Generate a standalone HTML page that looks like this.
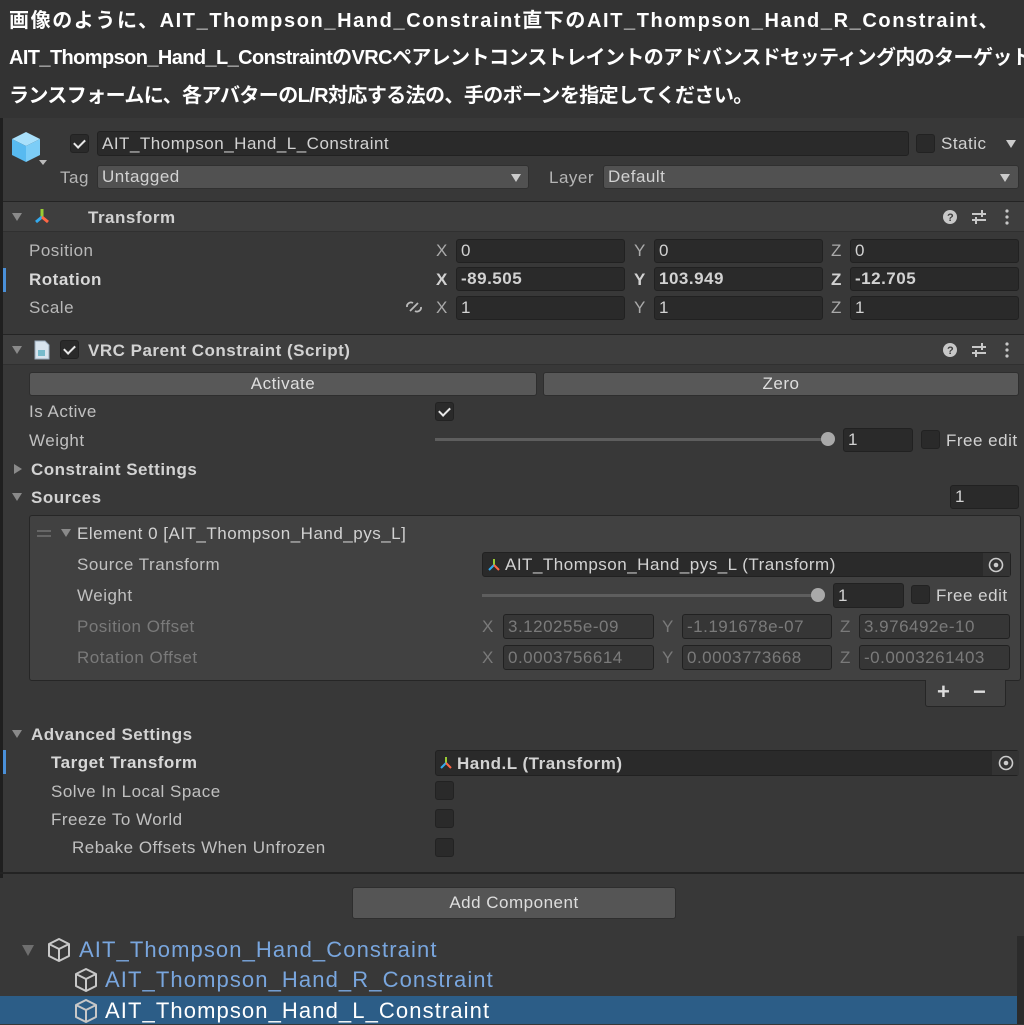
<!DOCTYPE html>
<html><head><meta charset="utf-8"><style>
*{margin:0;padding:0;box-sizing:border-box}
body{width:1024px;height:1024px;background:#383838;position:relative;overflow:hidden;font-family:"Liberation Sans","Noto Sans CJK JP",sans-serif;color:#d2d2d2;font-size:17px;letter-spacing:0.5px}
.a{position:absolute;white-space:nowrap}
.t{position:absolute;white-space:nowrap;line-height:20px}
.f{position:absolute;background:#2a2a2a;border:1px solid #212121;border-radius:3px;color:#d2d2d2;padding-left:4px;font-size:17px;line-height:22px;white-space:nowrap;overflow:hidden}
.d{position:absolute;background:#515151;border:1px solid #303030;border-radius:3px;padding-left:4px;font-size:17px;line-height:22px}
.cb{position:absolute;width:19px;height:19px;background:#2a2a2a;border:1px solid #222;border-radius:3px}
.hd{position:absolute;left:3px;right:0;background:#3e3e3e;border-top:1px solid #242424;border-bottom:1px solid #303030}
.b{font-weight:bold}
.g{color:#7a7a7a}
.sep{position:absolute;left:3px;right:0;height:2px;background:#232323}
.ck::after{content:"";position:absolute;left:5px;top:2px;width:5px;height:9px;border:solid #e8e8e8;border-width:0 2px 2px 0;transform:rotate(45deg)}
.tri{position:absolute;width:0;height:0;border-left:5px solid transparent;border-right:5px solid transparent;border-top:8px solid #8a8a8a}
.trr{position:absolute;width:0;height:0;border-top:5px solid transparent;border-bottom:5px solid transparent;border-left:8px solid #8a8a8a}
.btn{position:absolute;background:#585858;border:1px solid #2e2e2e;border-radius:3px;text-align:center;color:#dedede}
.hi{color:#79a6de;font-size:22px;line-height:28px;letter-spacing:1.1px}
.cap{position:absolute;white-space:nowrap;left:9px;color:#fff;font-size:20px;line-height:24px;font-weight:bold}
</style></head><body>
<div class="a" style="left:0;top:0;width:1024px;height:118px;background:#333"></div>
<div class="cap" style="top:9px;letter-spacing:1.6px">画像のように、AIT_Thompson_Hand_Constraint直下のAIT_Thompson_Hand_R_Constraint、</div>
<div class="cap" style="top:46px;letter-spacing:-0.6px">AIT_Thompson_Hand_L_ConstraintのVRCペアレントコンストレイントのアドバンスドセッティング内のターゲットト</div>
<div class="cap" style="top:84px;letter-spacing:-0.6px">ランスフォームに、各アバターのL/R対応する法の、手のボーンを指定してください。</div>
<div class="a" style="left:0;top:118px;width:3px;height:760px;background:#1f1f1f"></div>

<svg class="a" style="left:10px;top:130px" width="40" height="40" viewBox="0 0 40 40"><polygon points="16,2 30,9 16,16 2,9" fill="#a9e0fb"/><polygon points="2,9 16,16 16,32 2,25" fill="#58baf0"/><polygon points="30,9 16,16 16,32 30,25" fill="#7ccdf7"/><polygon points="29,30 37,30 33,35" fill="#bbb"/></svg>
<div class="cb ck" style="left:70px;top:134px"></div>
<div class="f" style="left:97px;top:131px;width:812px;height:25px;line-height:24px">AIT_Thompson_Hand_L_Constraint</div>
<div class="cb" style="left:916px;top:134px"></div>
<div class="t" style="left:941px;top:134px">Static</div>
<div class="tri" style="left:1006px;top:140px;border-top-color:#ccc"></div>
<div class="t" style="left:60px;top:168px;color:#b5b5b5">Tag</div>
<div class="d" style="left:97px;top:165px;width:432px;height:24px">Untagged</div>
<div class="tri" style="left:511px;top:174px;border-top-color:#ccc"></div>
<div class="t" style="left:549px;top:168px;color:#b5b5b5">Layer</div>
<div class="d" style="left:603px;top:165px;width:416px;height:24px">Default</div>
<div class="tri" style="left:1000px;top:174px;border-top-color:#ccc"></div>

<div class="hd" style="top:201px;height:31px"></div>
<div class="tri" style="left:12px;top:213px"></div>
<svg class="a" style="left:32px;top:206px" width="20" height="20"><path d="M10 3v8" stroke="#9c3" stroke-width="3"/><path d="M10 11l-6 5" stroke="#3ae" stroke-width="3"/><path d="M10 11l6 5" stroke="#f64" stroke-width="3"/></svg>
<div class="t b" style="left:88px;top:208px">Transform</div>
<svg class="a" style="left:942px;top:207px" width="80" height="20"><circle cx="8" cy="10" r="7" fill="#c8c8c8"/><text x="5" y="14" font-size="11" font-weight="bold" fill="#3e3e3e" font-family="Liberation Sans">?</text><path d="M30 7h14M30 13h14M40 3v7M34 10v7" stroke="#c8c8c8" stroke-width="2"/><circle cx="65" cy="4" r="1.6" fill="#c8c8c8"/><circle cx="65" cy="10" r="1.6" fill="#c8c8c8"/><circle cx="65" cy="16" r="1.6" fill="#c8c8c8"/></svg>

<div class="t" style="left:29px;top:241px;color:#b8b8b8">Position</div>
<div class="a" style="left:3px;top:268px;width:3px;height:24px;background:#4a90d9"></div>
<div class="t b" style="left:29px;top:270px;color:#d8d8d8">Rotation</div>
<div class="t" style="left:29px;top:298px;color:#b8b8b8">Scale</div>
<svg class="a" style="left:404px;top:298px" width="20" height="18"><path d="M3 9a4 4 0 0 1 6-4M17 9a4 4 0 0 1-6 4M6 13l8-8" stroke="#bbb" stroke-width="1.8" fill="none"/></svg>

<div class="t" style="left:436px;top:241px;color:#aaa">X</div><div class="f" style="left:456px;top:239px;width:169px;height:24px">0</div>
<div class="t" style="left:634px;top:241px;color:#aaa">Y</div><div class="f" style="left:654px;top:239px;width:169px;height:24px">0</div>
<div class="t" style="left:831px;top:241px;color:#aaa">Z</div><div class="f" style="left:850px;top:239px;width:169px;height:24px">0</div>
<div class="t b" style="left:436px;top:270px">X</div><div class="f b" style="left:456px;top:267px;width:169px;height:24px">-89.505</div>
<div class="t b" style="left:634px;top:270px">Y</div><div class="f b" style="left:654px;top:267px;width:169px;height:24px">103.949</div>
<div class="t b" style="left:831px;top:270px">Z</div><div class="f b" style="left:850px;top:267px;width:169px;height:24px">-12.705</div>
<div class="t" style="left:436px;top:298px;color:#aaa">X</div><div class="f" style="left:456px;top:296px;width:169px;height:24px">1</div>
<div class="t" style="left:634px;top:298px;color:#aaa">Y</div><div class="f" style="left:654px;top:296px;width:169px;height:24px">1</div>
<div class="t" style="left:831px;top:298px;color:#aaa">Z</div><div class="f" style="left:850px;top:296px;width:169px;height:24px">1</div>

<div class="hd" style="top:334px;height:31px"></div>
<div class="tri" style="left:12px;top:346px"></div>
<svg class="a" style="left:34px;top:340px" width="16" height="20"><path d="M1 1h10l4 4v14H1z" fill="#d8e4ee" stroke="#9ab" /><rect x="4" y="10" width="7" height="6" fill="#7bc"/></svg>
<div class="cb ck" style="left:60px;top:340px"></div>
<div class="t b" style="left:88px;top:341px">VRC Parent Constraint (Script)</div>
<svg class="a" style="left:942px;top:340px" width="80" height="20"><circle cx="8" cy="10" r="7" fill="#c8c8c8"/><text x="5" y="14" font-size="11" font-weight="bold" fill="#3e3e3e" font-family="Liberation Sans">?</text><path d="M30 7h14M30 13h14M40 3v7M34 10v7" stroke="#c8c8c8" stroke-width="2"/><circle cx="65" cy="4" r="1.6" fill="#c8c8c8"/><circle cx="65" cy="10" r="1.6" fill="#c8c8c8"/><circle cx="65" cy="16" r="1.6" fill="#c8c8c8"/></svg>

<div class="btn" style="left:29px;top:372px;width:508px;height:24px;line-height:22px">Activate</div>
<div class="btn" style="left:543px;top:372px;width:476px;height:24px;line-height:22px">Zero</div>
<div class="t" style="left:29px;top:402px;color:#c0c0c0">Is Active</div>
<div class="cb ck" style="left:435px;top:402px"></div>
<div class="t" style="left:29px;top:431px;color:#c0c0c0">Weight</div>
<div class="a" style="left:435px;top:438px;width:390px;height:3px;background:#5e5e5e"></div>
<div class="a" style="left:821px;top:432px;width:14px;height:14px;border-radius:50%;background:#a9a9a9"></div>
<div class="f" style="left:843px;top:428px;width:70px;height:24px">1</div>
<div class="cb" style="left:921px;top:430px"></div>
<div class="t" style="left:946px;top:431px">Free edit</div>
<div class="trr" style="left:14px;top:464px"></div>
<div class="t b" style="left:31px;top:460px">Constraint Settings</div>
<div class="tri" style="left:12px;top:493px"></div>
<div class="t b" style="left:31px;top:488px">Sources</div>
<div class="f" style="left:950px;top:485px;width:69px;height:24px">1</div>

<div class="a" style="left:29px;top:515px;width:992px;height:166px;background:#414141;border:1px solid #262626;border-radius:3px"></div>
<div class="a" style="left:37px;top:530px;width:14px;height:2px;background:#666"></div>
<div class="a" style="left:37px;top:535px;width:14px;height:2px;background:#666"></div>
<div class="tri" style="left:61px;top:529px"></div>
<div class="t" style="left:77px;top:524px">Element 0 [AIT_Thompson_Hand_pys_L]</div>
<div class="t" style="left:77px;top:555px;color:#c0c0c0">Source Transform</div>
<div class="f" style="left:482px;top:552px;width:529px;height:25px;padding-left:22px;line-height:24px">AIT_Thompson_Hand_pys_L (Transform)</div>
<svg class="a" style="left:486px;top:557px" width="16" height="16"><path d="M8 2v6" stroke="#9c3" stroke-width="2"/><path d="M8 8l-5 5" stroke="#3ae" stroke-width="2"/><path d="M8 8l5 5" stroke="#f64" stroke-width="2"/></svg>
<div class="a" style="left:983px;top:553px;width:27px;height:23px;background:#333"></div>
<svg class="a" style="left:987px;top:556px" width="18" height="18"><circle cx="9" cy="9" r="6.5" stroke="#ccc" stroke-width="1.6" fill="none"/><circle cx="9" cy="9" r="2.3" fill="#ccc"/></svg>
<div class="t" style="left:77px;top:586px;color:#c0c0c0">Weight</div>
<div class="a" style="left:482px;top:594px;width:332px;height:3px;background:#5e5e5e"></div>
<div class="a" style="left:811px;top:588px;width:14px;height:14px;border-radius:50%;background:#a9a9a9"></div>
<div class="f" style="left:833px;top:583px;width:71px;height:25px;line-height:24px">1</div>
<div class="cb" style="left:911px;top:585px"></div>
<div class="t" style="left:936px;top:586px">Free edit</div>
<div class="t g" style="left:77px;top:617px">Position Offset</div>
<div class="t g" style="left:77px;top:648px">Rotation Offset</div>
<div class="t g" style="left:482px;top:617px">X</div><div class="f g" style="left:503px;top:614px;width:151px;height:25px;line-height:24px;background:#363636">3.120255e-09</div>
<div class="t g" style="left:662px;top:617px">Y</div><div class="f g" style="left:682px;top:614px;width:150px;height:25px;line-height:24px;background:#363636">-1.191678e-07</div>
<div class="t g" style="left:840px;top:617px">Z</div><div class="f g" style="left:859px;top:614px;width:151px;height:25px;line-height:24px;background:#363636">3.976492e-10</div>
<div class="t g" style="left:482px;top:648px">X</div><div class="f g" style="left:503px;top:645px;width:151px;height:25px;line-height:24px;background:#363636">0.0003756614</div>
<div class="t g" style="left:662px;top:648px">Y</div><div class="f g" style="left:682px;top:645px;width:150px;height:25px;line-height:24px;background:#363636">0.0003773668</div>
<div class="t g" style="left:840px;top:648px">Z</div><div class="f g" style="left:859px;top:645px;width:151px;height:25px;line-height:24px;background:#363636">-0.0003261403</div>
<div class="a" style="left:925px;top:680px;width:81px;height:27px;background:#414141;border:1px solid #262626;border-top:none;border-radius:0 0 3px 3px"></div>
<div class="t b" style="left:937px;top:682px;font-size:22px;color:#ddd">+</div>
<div class="t b" style="left:973px;top:682px;font-size:22px;color:#ddd">−</div>

<div class="tri" style="left:12px;top:730px"></div>
<div class="t b" style="left:31px;top:725px">Advanced Settings</div>
<div class="a" style="left:3px;top:750px;width:3px;height:24px;background:#4a90d9"></div>
<div class="t b" style="left:51px;top:753px;color:#d8d8d8">Target Transform</div>
<div class="f b" style="left:435px;top:750px;width:584px;height:26px;padding-left:21px;line-height:25px">Hand.L (Transform)</div>
<svg class="a" style="left:438px;top:755px" width="16" height="16"><path d="M8 2v6" stroke="#9c3" stroke-width="2"/><path d="M8 8l-5 5" stroke="#3ae" stroke-width="2"/><path d="M8 8l5 5" stroke="#f64" stroke-width="2"/></svg>
<div class="a" style="left:992px;top:751px;width:27px;height:24px;background:#333"></div>
<svg class="a" style="left:997px;top:754px" width="18" height="18"><circle cx="9" cy="9" r="6.5" stroke="#ccc" stroke-width="1.6" fill="none"/><circle cx="9" cy="9" r="2.3" fill="#ccc"/></svg>
<div class="t" style="left:51px;top:782px;color:#c0c0c0">Solve In Local Space</div><div class="cb" style="left:435px;top:781px"></div>
<div class="t" style="left:51px;top:810px;color:#c0c0c0">Freeze To World</div><div class="cb" style="left:435px;top:809px"></div>
<div class="t" style="left:72px;top:838px;color:#c0c0c0">Rebake Offsets When Unfrozen</div><div class="cb" style="left:435px;top:838px"></div>

<div class="sep" style="top:872px;left:0"></div>
<div class="btn" style="left:352px;top:887px;width:324px;height:32px;line-height:30px;background:#555">Add Component</div>

<div class="tri" style="left:22px;top:945px;border-top-width:11px;border-left-width:6px;border-right-width:6px;border-top-color:#6e6e6e"></div>
<svg class="a" style="left:45px;top:936px" width="28" height="28"><path d="M14 3l10 5v12l-10 5-10-5V8z M4 8l10 5 10-5 M14 13v12" stroke="#c8c8c8" stroke-width="2" fill="none" stroke-linejoin="round"/></svg>
<div class="t hi" style="left:79px;top:936px">AIT_Thompson_Hand_Constraint</div>
<svg class="a" style="left:72px;top:966px" width="28" height="28"><path d="M14 3l10 5v12l-10 5-10-5V8z M4 8l10 5 10-5 M14 13v12" stroke="#c8c8c8" stroke-width="2" fill="none" stroke-linejoin="round"/></svg>
<div class="t hi" style="left:105px;top:966px">AIT_Thompson_Hand_R_Constraint</div>
<div class="a" style="left:0;top:996px;width:1017px;height:28px;background:#2c5d87"></div>
<svg class="a" style="left:72px;top:997px" width="28" height="28"><path d="M14 3l10 5v12l-10 5-10-5V8z M4 8l10 5 10-5 M14 13v12" stroke="#c8c8c8" stroke-width="2" fill="none" stroke-linejoin="round"/></svg>
<div class="t hi" style="left:105px;top:997px;color:#fff">AIT_Thompson_Hand_L_Constraint</div>
<div class="a" style="left:1017px;top:936px;width:7px;height:88px;background:#2b2b2b"></div>
</body></html>
